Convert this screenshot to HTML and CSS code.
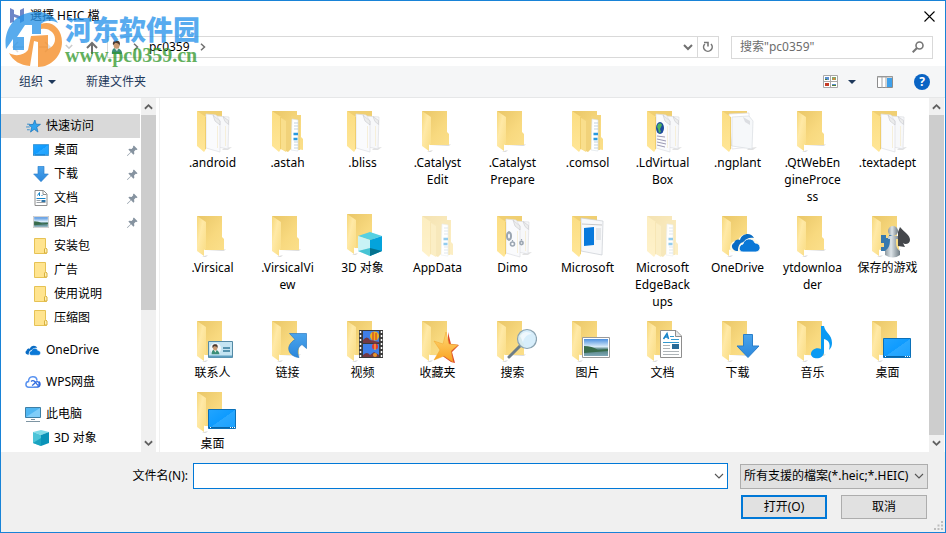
FILE: index.html
```html
<!DOCTYPE html>
<html lang="zh-CN">
<head>
<meta charset="utf-8">
<title>選擇 HEIC 檔</title>
<link rel="stylesheet" href="styles.css">
</head>
<body>
<svg class="defs" aria-hidden="true">
  <defs>
    <linearGradient id="gBack" x1="0" y1="0" x2="1" y2="1"><stop offset="0" stop-color="#e9c667"/><stop offset=".6" stop-color="#f8d97f"/><stop offset="1" stop-color="#fbdf8a"/></linearGradient>
    <linearGradient id="gFlap" x1="0" y1="0" x2="1" y2="1"><stop offset="0" stop-color="#f6d779"/><stop offset=".4" stop-color="#ffe9a6"/><stop offset="1" stop-color="#f9dc83"/></linearGradient>
    <linearGradient id="gFlapFull" x1="0" y1="0" x2="0" y2="1"><stop offset="0" stop-color="#fbdd82"/><stop offset="1" stop-color="#ffe697"/></linearGradient>
    <linearGradient id="gBlue" x1="0" y1="0" x2="1" y2="1"><stop offset="0" stop-color="#22a5ff"/><stop offset=".5" stop-color="#0e9bff"/><stop offset=".51" stop-color="#2aa8ff"/><stop offset="1" stop-color="#1aa1ff"/></linearGradient>
    <linearGradient id="gArrow" x1="0" y1="0" x2="0" y2="1"><stop offset="0" stop-color="#4aa4ec"/><stop offset="1" stop-color="#2b87dc"/></linearGradient>
    <linearGradient id="gPhoto" x1="0" y1="0" x2="0" y2="1"><stop offset="0" stop-color="#4b8fe0"/><stop offset=".45" stop-color="#d8ebf8"/><stop offset=".6" stop-color="#4d7d78"/><stop offset="1" stop-color="#7fa8b8"/></linearGradient>
    <linearGradient id="gPawn" x1="0" y1="0" x2="1" y2="0"><stop offset="0" stop-color="#8d99a0"/><stop offset=".4" stop-color="#dde4e8"/><stop offset="1" stop-color="#6d7a82"/></linearGradient>
    <linearGradient id="gStar" x1="0" y1="0" x2="0" y2="1"><stop offset="0" stop-color="#ffd978"/><stop offset="1" stop-color="#f9a11e"/></linearGradient>

    <symbol id="folder" viewBox="0 0 48 48">
      <path d="M33 39l4-1-2 2H17z" fill="#ddd"/><path d="M15 45l4-1-2 2h-4z" fill="#ddd"/>
      <path d="M8 5h25v21l2 2v11H16z" fill="url(#gBack)"/>
      <path d="M8 5l9 6v27l-2 1v6l-7-5z" fill="url(#gFlap)"/>
    </symbol>
    <symbol id="shell" viewBox="0 0 48 48">
      <path d="M8 5h25v35H16z" fill="#f0cf72"/>
    </symbol>
    <symbol id="flap" viewBox="0 0 48 48">
      <path d="M8 5l9 6v32l-2 3-7-6z" fill="url(#gFlapFull)"/><path d="M16.500 11v32" stroke="#f0ce6e" fill="none"/>
    </symbol>
    <symbol id="docs" viewBox="0 0 48 48">
      <path d="M35 42l8-1-4 3h-6z" fill="#e2e2e2"/>
      <use href="#shell"/>
      <path d="M27 10l13 1-1 32-10-2z" fill="#f7f8fa" stroke="#dcdee2" stroke-width=".7"/>
      <path d="M17 8l10 1 4 6v31l-14-4z" fill="#fafbfd" stroke="#dcdee2" stroke-width=".7"/>
      <path d="M24 9l2 6 5 4v-4zM34 10.500l2 5 3.500 3v-4z" fill="#eceded" stroke="#c7c8cc" stroke-width=".6"/>
      <path d="M28.500 20v22M36.500 20v20" stroke="#f6efda"/>
      <use href="#flap"/>
    </symbol>
    <symbol id="onedoc" viewBox="0 0 48 48">
      <path d="M35 42l8-1-4 3h-6z" fill="#e2e2e2"/>
      <use href="#shell"/>
      <path d="M15 8l20-1 1 34-18 2z" fill="#fff" stroke="#dcdde2" stroke-width=".7"/>
      <path d="M18 11l17-1 4 5-1 28-20-3z" fill="#f6f8fa" stroke="#d9dce1" stroke-width=".7"/>
      <path d="M29 11l2 5 5 3v-4z" fill="#dcdee2"/>
      <use href="#flap"/>
    </symbol>
    <symbol id="nested" viewBox="0 0 48 48">
      <path d="M8 5h25v4h4v22l2 2v11l-18-3z" fill="url(#gBack)"/>
      <path d="M27 10h9v34h-9z" fill="#f3d47c"/>
      <path d="M28 13l6 1v31l-7-1z" fill="#fff" stroke="#d9e0e6" stroke-width=".6"/>
      <path d="M30 17h4M30 20h4M30 23h4M30 36h4M30 39h4M30 42h4" stroke="#a7bfd0" stroke-width=".7"/>
      <path d="M29.500 28h4.500M29.500 33h4" stroke="#2a9ade" stroke-width="2.500"/>
      <path d="M17 12l10 3v28l-3 3-7-3z" fill="#f1d27a"/><path d="M17 12l5 3v31l-5-3z" fill="#f9de8c"/>
      <use href="#flap"/>
    </symbol>
    <symbol id="cube" viewBox="0 0 24 24">
      <path d="M12 0l12 4-12 4L0 4z" fill="#55d0e2"/><path d="M0 4l12 4v16L0 19z" fill="#c9f3f6"/><path d="M24 4L12 8v16l12-5z" fill="#04a3dc"/><path d="M12 16l12 3-12 5z" fill="#06728e"/><path d="M0 19l12-3v8z" fill="#47c4d4"/>
    </symbol>
    <symbol id="minicube" viewBox="0 0 16 16">
      <path d="M8 0l8 2-8 3-8-3z" fill="#7fdbe8"/><path d="M0 2l8 3v11l-8-3z" fill="#4cc4d8"/><path d="M16 2L8 5v11l8-3z" fill="#0a93b8"/><path d="M0 13l8-5v8z" fill="#1ba3c0"/>
    </symbol>
    <symbol id="screen" viewBox="0 0 28 20">
      <path d="M.5.5h27v19H.5z" fill="url(#gBlue)" stroke="#0b70b8"/><path d="M1 18.500h26" stroke="#0865a8"/><path d="M2 18.500h1m19 0h1m1 0h1m1 0h1" stroke="#fff"/>
    </symbol>
    <symbol id="down" viewBox="0 0 24 24">
      <path d="M7.500.5h9V12H23L12 23.500 1 12h6.500z" fill="url(#gArrow)" stroke="#2a7fcb"/>
    </symbol>
    <symbol id="page" viewBox="0 0 22 28">
      <path d="M.5.500H16l5.500 5.500v21.500H.5z" fill="#fff" stroke="#8e8e8e"/><path d="M15.500 1v5.500H21" fill="#e8e8e8" stroke="#8e8e8e"/>
      <path d="M3.500 9L7 3.500 8.500 9M5 7h3" fill="none" stroke="#1583c9" stroke-width="1.500"/>
      <path d="M10 6.500h4M11 9.500h8M3 12.500h16" stroke="#3298cf"/><path d="M3 15.500h7M3 18.500h7M3 21.500h16M3 24.500h16" stroke="#aeb4b8"/><path d="M12 14h7v5h-7z" fill="#286a98"/>
    </symbol>
    <symbol id="minipage" viewBox="0 0 13 16">
      <path d="M.5.500h8.500l3.500 3.500v11.500H.5z" fill="#fff" stroke="#8e8e8e"/><path d="M8.500 1v3.500H12" fill="none" stroke="#8e8e8e"/>
      <path d="M3 5.500L5 2.500V6M7 5.500h1M2 8.500h9" fill="none" stroke="#1583c9"/><path d="M2 10.500h4M2 12.500h9" stroke="#9aa0a6"/><path d="M7 10h4v2H7z" fill="#2d75aa"/>
    </symbol>
    <symbol id="photo" viewBox="0 0 28 21">
      <path d="M.5.5h27v20H.5z" fill="#fff" stroke="#9a9a9a"/><path d="M2 2h24v17H2z" fill="url(#gPhoto)"/><path d="M2 9q8 0 14 4l10-1v2L2 16z" fill="#386b4b"/>
    </symbol>
    <symbol id="cloud" viewBox="0 0 30 20">
      <path d="M7 18C1 18-1 12 3 10c1-4 5-4 6-3 2-7 11-8 14-2-5-1-8 1-9 4-6 0-7 5-7 9z" fill="#0a6cc4"/>
      <path d="M12 19c-5 0-5-7 0-8 1-6 10-7 12-1 6 0 7 8 1 9z" fill="#0a78d7" stroke="#fff" stroke-width=".8"/>
    </symbol>
    <symbol id="minifolder" viewBox="0 0 14 16">
      <path d="M.5.500h11v9l1 1v5H.5z" fill="#ffe48f" stroke="#e6c254"/><path d="M10.500 15v-4l1-1 1.500 1v4z" fill="#fff0b5" stroke="#d9b13d"/>
    </symbol>
    <symbol id="pin" viewBox="0 0 12 12">
      <path d="M7.500.500L11.500 4.500l-1 1-1-.3L7.700 7l.3 2.500-1 1-2.500-2.500L.5 12 0 11.500 4 7.500 1.500 5l1-1L5 4.300 6.800 2.500l-.3-1z" fill="#8693a0"/>
    </symbol>
    <symbol id="chevD" viewBox="0 0 10 7"><path d="M1 1l4 4 4-4" fill="none" stroke="currentColor" stroke-width="2"/></symbol>
    <symbol id="chevR" viewBox="0 0 6 8"><path d="M1 .700L4.500 4 1 7.300" fill="none" stroke="currentColor" stroke-width="1.500"/></symbol>
    <symbol id="chevThin" viewBox="0 0 10 7"><path d="M1 1l4 4 4-4" fill="none" stroke="#555" stroke-width="1.100"/></symbol>
    <symbol id="tri" viewBox="0 0 8 4"><path d="M0 0h8L4 4z" fill="#1e395b"/></symbol>
    <symbol id="person" viewBox="0 0 14 17">
      <path d="M1 16c0-5 1-7 5-7s7 3 7 7z" fill="#3c8e78"/><path d="M4 9l3 4 2-4z" fill="#e7efe8"/><ellipse cx="6.500" cy="5.500" rx="3.500" ry="4.500" fill="#c99a72"/><path d="M2.500 6C1 1 5 0 7 .5c4 0 4 4 2.500 6C9.500 3 7 4 5 3z" fill="#4a3a31"/>
    </symbol>
  </defs>
</svg>

<div class="dialog">
  <header class="titlebar">
    <svg class="appicon" viewBox="0 0 16 16"><path d="M1 0l4 2v4l6 2V2l4-2v13l-4 2v-4L5 9v5l-4 1z" fill="#6f87c8"/></svg>
    <h1>選擇 HEIC 檔</h1>
    <button class="close" aria-label="关闭"><svg width="11" height="11" viewBox="0 0 11 11"><path d="M.5.5l10 10m0-10l-10 10" stroke="#000" stroke-width="1.100"/></svg></button>
  </header>

  <div class="navbar">
    <div class="history">
      <button aria-label="返回"><svg width="14" height="12" viewBox="0 0 14 12"><path d="M13 6H2m5-5L2 6l5 5" fill="none" stroke="#ddd" stroke-width="1.500"/></svg></button>
      <button aria-label="前进"><svg width="14" height="12" viewBox="0 0 14 12"><path d="M1 6h11M7 1l5 5-5 5" fill="none" stroke="#ddd" stroke-width="1.500"/></svg></button>
      <button class="recent" aria-label="最近位置"><svg width="8" height="6"><use href="#chevD"/></svg></button>
      <button aria-label="上移"><svg width="12" height="13" viewBox="0 0 12 13"><path d="M6 13V2M1 7l5-5 5 5" fill="none" stroke="#707070" stroke-width="2"/></svg></button>
    </div>
    <div class="address">
      <svg width="12" height="17"><use href="#person"/></svg>
      <svg class="crumb" width="6" height="8"><use href="#chevR"/></svg>
      <a href="#">pc0359</a>
      <svg class="crumb" width="6" height="8"><use href="#chevR"/></svg>
      <button class="drop" aria-label="历史记录"><svg width="10" height="7"><use href="#chevD"/></svg></button>
      <button class="refresh" aria-label="刷新"><svg width="12" height="12" viewBox="0 0 12 12"><path d="M2.800 3A4.300 4.300 0 1 0 9 3" fill="none" stroke="#777" stroke-width="1.600"/><path d="M2 1.500h4v4" fill="none" stroke="#777" stroke-width="1.600"/></svg></button>
    </div>
    <div class="search">
      <input type="text" aria-label="搜索" placeholder='搜索"pc0359"'>
      <svg width="12" height="12" viewBox="0 0 12 12"><circle cx="7.500" cy="4.500" r="3.500" fill="none" stroke="#777" stroke-width="1.600"/><path d="M5 7L.7 11.300" stroke="#777" stroke-width="2"/></svg>
    </div>
  </div>

  <div class="toolbar">
    <button class="organize">组织 <svg width="8" height="4"><use href="#tri"/></svg></button>
    <button>新建文件夹</button>
    <div class="tools">
      <button class="view" aria-label="视图"><svg width="15" height="13" viewBox="0 0 15 13"><path d="M.5.500h14v12H.5zM7.500 0v13M0 6.500h15" fill="#fff" stroke="#a8a8a8"/><path d="M2 2h4v3H2zM9 9h4v2H9z" fill="#5b8fce"/><path d="M9 2h4v3H9z" fill="#83a66b"/><path d="M2 8h4v3H2z" fill="#c53b26"/><path d="M10 3h2v2h-2z" fill="#d9883d"/><path d="M9 10h4v1H9zM2 4h2v1H2z" fill="#4e7b32"/></svg><svg width="8" height="4"><use href="#tri"/></svg></button>
      <button aria-label="预览窗格"><svg width="16" height="12" viewBox="0 0 16 12"><path d="M.5.500h15v11H.5z" fill="#fff" stroke="#8c8c8c"/><path d="M0 1h16M5 1v11M9 1v11" stroke="#a5a5a5"/><path d="M10 2h5v9h-5z" fill="#3ea0ea"/></svg></button>
      <button aria-label="帮助"><span class="help">?</span></button>
    </div>
  </div>

  <main class="content">
    <nav class="tree">
      <ul>
        <li class="selected root"><a href="#"><svg width="15" height="13" viewBox="0 0 16 14"><path d="M9.500 0l1.300 4.500 4.700.2-4 3 1.300 5.300-4-3-4 3L6 8 3 5l4.500-.3z" fill="#2fa3ee" stroke="#1976bd" stroke-width=".8"/><path d="M1 4.500h3M0 7.500h4M1 10.500h3" stroke="#3b8fca"/></svg>快速访问</a></li>
        <li><a href="#"><svg width="16" height="12"><use href="#screen"/></svg>桌面<svg class="pin"><use href="#pin"/></svg></a></li>
        <li><a href="#"><svg width="16" height="16"><use href="#down"/></svg>下载<svg class="pin"><use href="#pin"/></svg></a></li>
        <li><a href="#"><svg width="16" height="16"><use href="#minipage"/></svg>文档<svg class="pin"><use href="#pin"/></svg></a></li>
        <li><a href="#"><svg width="16" height="12"><use href="#photo"/></svg>图片<svg class="pin"><use href="#pin"/></svg></a></li>
        <li><a href="#"><svg width="16" height="16"><use href="#minifolder"/></svg>安装包</a></li>
        <li><a href="#"><svg width="16" height="16"><use href="#minifolder"/></svg>广告</a></li>
        <li><a href="#"><svg width="16" height="16"><use href="#minifolder"/></svg>使用说明</a></li>
        <li><a href="#"><svg width="16" height="16"><use href="#minifolder"/></svg>压缩图</a></li>
      </ul>
      <ul><li class="root"><a href="#"><svg width="16" height="11"><use href="#cloud"/></svg>OneDrive</a></li></ul>
      <ul><li class="root"><a href="#"><svg width="16" height="12" viewBox="0 0 16 12"><path d="M9 11.200H3.700C0 11 .1 6 3.500 5.600 3.600-.6 11.600-.600 12 4.600" fill="none" stroke="#5a93f0" stroke-width="1.500"/><path d="M6 5.500c2-2 4 0 5 1.500s2 3 3 1.500c.6-2-1-3.500-2.700-2.700C9.500 7 9 8.500 7 9.500M9 11.200h2.500c4 0 4.400-4 2.300-5.600" fill="none" stroke="#2f6be0" stroke-width="1.300"/></svg>WPS网盘</a></li></ul>
      <ul>
        <li class="root"><a href="#"><svg width="16" height="15" viewBox="0 0 16 15"><path d="M.5.500h15v10H.5z" fill="#4fb6f2" stroke="#3d7fa6"/><path d="M1 10L15 1v9z" fill="#7fcdf9"/><path d="M6 12.500h4M1 14.500h14" stroke="#7e95a3"/></svg>此电脑</a></li>
        <li><a href="#"><svg width="16" height="16"><use href="#minicube"/></svg>3D 对象</a></li>
      </ul>
    </nav>
    <div class="scroll scroll-tree"><svg class="up" width="9" height="7"><use href="#chevD"/></svg><div class="track"><div class="thumb"></div></div><svg width="9" height="7"><use href="#chevD"/></svg></div>

    <ul class="files">
      <li><a href="#"><svg><use href="#docs"/></svg><span>.android</span></a></li>
      <li><a href="#"><svg><use href="#nested"/></svg><span>.astah</span></a></li>
      <li><a href="#"><svg><use href="#docs"/></svg><span>.bliss</span></a></li>
      <li><a href="#"><svg><use href="#folder"/></svg><span>.Catalyst Edit</span></a></li>
      <li><a href="#"><svg><use href="#folder"/></svg><span>.Catalyst Prepare</span></a></li>
      <li><a href="#"><svg><use href="#nested"/></svg><span>.comsol</span></a></li>
      <li><a href="#"><svg viewBox="0 0 48 48"><use href="#docs"/><ellipse cx="21" cy="22" rx="4" ry="6" fill="#1c4b9c"/><path d="M19 18q3-2 4 1l-2 4 1 3-2 1-1-4-1-2z" fill="#4db45e"/><path d="M18 30l8 1M18 33l9 2M18 36l9 2M18 39l8 2" stroke="#817fa0" stroke-width=".8"/></svg><span>.LdVirtual Box</span></a></li>
      <li><a href="#"><svg><use href="#onedoc"/></svg><span>.ngplant</span></a></li>
      <li><a href="#"><svg><use href="#folder"/></svg><span>.QtWebEngineProcess</span></a></li>
      <li><a href="#"><svg><use href="#docs"/></svg><span>.textadept</span></a></li>

      <li><a href="#"><svg><use href="#folder"/></svg><span>.Virsical</span></a></li>
      <li><a href="#"><svg><use href="#folder"/></svg><span>.VirsicalVi<wbr>ew</span></a></li>
      <li><a href="#"><svg viewBox="0 0 48 48"><use href="#folder" y="-2"/><use href="#cube" x="19" y="21" width="24" height="24"/></svg><span>3D 对象</span></a></li>
      <li class="hidden-item"><a href="#"><svg><use href="#nested"/></svg><span>AppData</span></a></li>
      <li><a href="#"><svg viewBox="0 0 48 48"><use href="#docs"/><g fill="none" stroke="#9ba6b2"><ellipse cx="20" cy="25" rx="2" ry="3.500" stroke-width="2"/><circle cx="23.500" cy="33" r="2" stroke-width="1.600"/><circle cx="32.500" cy="32" r="1.600" stroke-width="1.600"/><path d="M20 20v10M17 25h6M23.500 29v8M32.500 28v8" stroke-dasharray="1.500 7 1.500" stroke-width="1.200"/></g></svg><span>Dimo</span></a></li>
      <li><a href="#"><svg viewBox="0 0 48 48"><use href="#shell"/><path d="M17 7l22 3-1 34-21-4z" fill="#f7f8fa" stroke="#c9cdd3" stroke-width=".7"/><path d="M18 13l20 1" stroke="#bbb" stroke-width=".8"/><path d="M20 17l10-1v18l-10 1z" fill="#0879dc"/><path d="M32 18h5M32 20h5M32 22h5M32 24h5M32 26h5M32 28h5" stroke="#d2d5d8"/><use href="#flap"/></svg><span>Microsoft</span></a></li>
      <li class="hidden-item"><a href="#"><svg><use href="#nested"/></svg><span>Microsoft EdgeBackups</span></a></li>
      <li><a href="#"><svg viewBox="0 0 48 48"><use href="#folder"/><path d="M17 41c-3-9 3-12 7-11 2-8 12-9 16-2 5 1 8 9 4 13z" fill="#fffbe8"/><use href="#cloud" x="17" y="22" width="30" height="20"/></svg><span>OneDrive</span></a></li>
      <li><a href="#"><svg><use href="#folder"/></svg><span>ytdownloader</span></a></li>
      <li><a href="#"><svg viewBox="0 0 48 48"><use href="#folder"/><path d="M17 24h5v3h3v-3h4v16H17v-4h3v-4h-3z" fill="#3679ae"/><path d="M36 16c4 5 10 8 10 13 0 4-5 5-7 3l2 4-7-1V21z" fill="#44474b"/><circle cx="29" cy="20" r="5" fill="url(#gPawn)"/><path d="M24 25h10v3h-2c0 7 0 9 4 12v4q-7 5-15 0v-4c4-3 5-6 5-12h-2z" fill="url(#gPawn)"/></svg><span>保存的游戏</span></a></li>

      <li><a href="#"><svg viewBox="0 0 48 48"><use href="#folder"/><path d="M19.500 25.500h24v16h-24z" fill="#c4e4f2" stroke="#548aa5"/><path d="M20 40.500h23" stroke="#5e9fc0" stroke-width="2"/><circle cx="26.500" cy="32.500" r="5.500" fill="#f2f8fb"/><use href="#person" x="22" y="28" width="9" height="11"/><path d="M34 32h7M34 35h7" stroke="#337a99" stroke-width="1.500"/></svg><span>联系人</span></a></li>
      <li><a href="#"><svg viewBox="0 0 48 48"><use href="#folder"/><path d="M25.500 17.500h17v15l-4.500-4c-5 3-5 8-3 13-10-1-15-11-4-18z" fill="url(#gArrow)" stroke="#2b7bc4" stroke-width=".7"/></svg><span>链接</span></a></li>
      <li><a href="#"><svg viewBox="0 0 48 48"><use href="#folder"/><path d="M20 14h24v28H20z" fill="#3b3b3b"/><path d="M21.500 15v27M42.500 15v27" stroke="#fff" stroke-width="1.500" stroke-dasharray="2 2"/><path d="M24 15h16v12H24zM24 28h16v13H24z" fill="#3f7fe8"/><ellipse cx="35.500" cy="20" rx="4.500" ry="4.500" fill="#efb31b"/><path d="M34 16v9M37 17v7" stroke="#c82d2d"/><ellipse cx="36" cy="30.500" rx="3" ry="3" fill="#dd3938"/><path d="M36 28v6" stroke="#f8da39"/><path d="M24 24q4-5 7 0l9 2v1H24zM24 39q4-4 7 0l4-3 5 3v2H24z" fill="#733943"/><circle cx="36" cy="39" r="2" fill="#e5962c"/></svg><span>视频</span></a></li>
      <li><a href="#"><svg viewBox="0 0 48 48"><use href="#folder"/><path d="M34 16l3 12 8 1-7 7 3 11-4-1-10-7 7-9z" fill="#dc482a"/><path d="M32 16l3 12 9 1-7 6 2 11-9-6-10 4 6-10-6-9 9 3z" fill="url(#gStar)" stroke="#efa72e" stroke-width=".5"/></svg><span>收藏夹</span></a></li>
      <li><a href="#"><svg viewBox="0 0 48 48"><use href="#folder"/><path d="M31 30L20 41" stroke="#6d7d88" stroke-width="3" stroke-linecap="round"/><circle cx="38" cy="23" r="9.500" fill="#d3ecfb" fill-opacity=".9" stroke="#8ba3b1" stroke-width="1.200"/><path d="M31 20q5-7 12-2-7 0-9 8z" fill="#fff" opacity=".6"/></svg><span>搜索</span></a></li>
      <li><a href="#"><svg viewBox="0 0 48 48"><use href="#folder"/><use href="#photo" x="18" y="21" width="28" height="21"/></svg><span>图片</span></a></li>
      <li><a href="#"><svg viewBox="0 0 48 48"><use href="#folder"/><use href="#page" x="21" y="14" width="22" height="28"/></svg><span>文档</span></a></li>
      <li><a href="#"><svg viewBox="0 0 48 48"><use href="#folder"/><use href="#down" x="22" y="18" width="24" height="24"/></svg><span>下载</span></a></li>
      <li><a href="#"><svg viewBox="0 0 48 48"><use href="#folder"/><path d="M32 10h3c1 7 8 8 8 17 0 3-1 5-3 7 2-7-1-10-5-11v13c0 8-13 8-13 2 0-4 5-7 10-5z" fill="#0a9af3"/></svg><span>音乐</span></a></li>
      <li><a href="#"><svg viewBox="0 0 48 48"><use href="#folder"/><use href="#screen" x="19" y="22" width="28" height="20"/></svg><span>桌面</span></a></li>
      <li><a href="#"><svg viewBox="0 0 48 48"><use href="#folder"/><use href="#screen" x="19" y="22" width="28" height="20"/></svg><span>桌面</span></a></li>
    </ul>
    <div class="scroll scroll-files"><svg class="up" width="9" height="7"><use href="#chevD"/></svg><div class="track"><div class="thumb"></div></div><svg width="9" height="7"><use href="#chevD"/></svg></div>
  </main>

  <footer class="footer">
    <div class="row">
      <label for="filename">文件名(N):</label>
      <div class="combo"><input id="filename" type="text"><svg width="10" height="7"><use href="#chevThin"/></svg></div>
      <div class="filter"><select aria-label="文件类型"><option>所有支援的檔案(*.heic;*.HEIC)</option></select><svg width="10" height="7"><use href="#chevThin"/></svg></div>
    </div>
    <div class="row actions"><button class="primary">打开(O)</button><button>取消</button></div>
    <svg class="grip" width="9" height="9" viewBox="0 0 9 9"><path d="M7 0h2v2H7zM7 3.500h2v2H7zM7 7h2v2H7zM3.500 3.500h2v2h-2zM3.500 7h2v2h-2zM0 7h2v2H0z" fill="#bdbdbd"/></svg>
  </footer>

  <div class="watermark">
    <svg width="58" height="58" viewBox="0 0 58 58">
      <path d="M1 38C-2 19 9 3 28 1c12-1 21 4 25 11-6-3-13-3-17 1v10h-9V14h-7l-8 12h7v13H8V28z" fill="#2492e8"/>
      <path d="M36 13C46 9 57 17 57 31 57 45 46 56 33 56V31l-4-1-4 25C15 54 8 50 4 42c7 4 15 2 19-3l3-14 17-1v14c8-3 9-12 4-17-3-3-7-4-11-3z" fill="#f58a1f"/>
    </svg>
    <div class="brand"><strong>河东软件园</strong><span>www.pc0359.cn</span></div>
  </div>
</div>
</body>
</html>
```
FILE: styles.css
```css
* { box-sizing: border-box; }
body {
  margin: 0;
  font: 12px/16px "Noto Sans", "Noto Sans CJK SC", sans-serif;
  color: #000;
}
ul { list-style: none; margin: 0; padding: 0; }
a { color: inherit; text-decoration: none; }
button, input, select { font: inherit; color: inherit; }
button { border: 0; padding: 0; background: none; display: inline-flex; align-items: center; justify-content: center; }
svg { flex: none; }
.defs { position: absolute; width: 0; height: 0; }

.dialog {
  position: relative;
  display: flex;
  flex-direction: column;
  min-height: 100vh;
  border: 1px solid #1883d7;
  background: #fff;
}

.titlebar { display: flex; align-items: center; height: 30px; padding: 0 10px 0 8px; }
.appicon { width: 16px; height: 16px; }
.titlebar h1 { flex: 1; margin: 0 0 0 5px; font-size: 12px; font-weight: 400; }

.navbar { display: flex; align-items: center; height: 35px; padding: 0 12px 3px 10px; gap: 12px; }
.history { display: flex; align-items: center; gap: 13px; width: 84px; height: 22px; }
.recent { color: #ccc; }
.address {
  flex: 1;
  display: flex;
  align-items: center;
  height: 22px;
  gap: 10px;
  padding-left: 3px;
  border: 1px solid #d9d9d9;
  color: #707070;
}
.address a { color: #000; }
.address .drop { margin-left: auto; }
.address .refresh { align-self: stretch; width: 21px; margin-left: -6px; border-left: 1px solid #d9d9d9; }
.search { display: flex; align-items: center; width: 202px; height: 23px; padding: 0 8px; border: 1px solid #d9d9d9; }
.search input { flex: 1; min-width: 0; border: 0; padding: 0; outline: 0; }
.search input::placeholder { color: #6d6d6d; opacity: 1; }

.toolbar {
  display: flex;
  align-items: center;
  gap: 30px;
  height: 32px;
  padding: 0 15px 0 18px;
  background: #f5f6f7;
  border-bottom: 1px solid #e6e7e8;
  color: #1e395b;
}
.organize { gap: 5px; }
.tools { display: flex; align-items: center; gap: 21px; margin-left: auto; }
.view { gap: 10px; }
.help {
  width: 16px;
  height: 16px;
  border-radius: 50%;
  background: #0a64c4;
  color: #fff;
  font-weight: 700;
  line-height: 16px;
  text-align: center;
}

.content { flex: 1; display: flex; }
.tree { width: 139px; padding-top: 16px; display: flex; flex-direction: column; gap: 8px; }
.tree a { display: flex; align-items: center; gap: 5px; height: 24px; padding: 0 2px 0 32px; }
.tree .root a { padding-left: 24px; }
.tree .selected { background: #d9d9d9; }
.tree .selected a { padding-left: 25px; }
.tree .pin { width: 11px; height: 11px; margin-left: auto; }

.scroll {
  display: flex;
  flex-direction: column;
  align-items: center;
  justify-content: space-between;
  width: 16px;
  padding: 5px 0;
  gap: 5px;
  background: #f0f0f0;
  color: #606060;
}
.scroll .up { transform: rotate(180deg); }
.track { flex: 1; width: 100%; }
.thumb { height: 100%; background: #cdcdcd; }
.scroll-tree { width: 15px; margin: 0 3px 0 1px; }
.scroll-tree .thumb { height: 61%; }

.files {
  flex: 1;
  display: grid;
  grid-template-columns: repeat(auto-fill, 75px);
  align-content: start;
  padding: 2px 0 0 15px;
  border-left: 1px solid #f0f0f0;
}
.files a { display: flex; flex-direction: column; align-items: center; padding: 6px 7px 0; line-height: 17px; text-align: center; }
.files svg { width: 48px; height: 48px; }
.files span { max-width: 100%; overflow-wrap: anywhere; }
.hidden-item svg { opacity: .5; }
.scroll-files { width: 15px; margin-right: 1px; }

.footer { position: relative; display: flex; flex-direction: column; gap: 6px; padding: 11px 17px 13px 0; background: #f0f0f0; }
.row { display: flex; align-items: center; gap: 12px; }
.row label { width: 187px; margin-right: -7px; text-align: right; }
.combo { position: relative; flex: 1; display: flex; align-items: center; height: 26px; border: 1px solid #0078d7; background: #fff; }
.combo input { flex: 1; height: 100%; border: 0; outline: 0; padding: 0 4px; background: none; }
.combo svg { margin-right: 3px; }
.filter { position: relative; width: 188px; height: 25px; }
.filter select { width: 100%; height: 100%; padding: 0 3px; appearance: none; border: 1px solid #adadad; border-radius: 0; background: #e1e1e1; }
.filter svg { position: absolute; right: 4px; top: 9px; }
.actions { justify-content: flex-end; gap: 14px; padding-right: 1px; }
.actions button { width: 86px; height: 24px; border: 1px solid #adadad; background: #e1e1e1; }
.actions .primary { border: 2px solid #0078d7; }
.grip { position: absolute; right: 2px; bottom: 2px; }

.watermark { position: absolute; left: 4px; top: 10px; display: flex; gap: 2px; opacity: .76; pointer-events: none; }
.brand { display: flex; flex-direction: column; padding-top: 3px; }
.brand strong { font: 900 27px/30px "Noto Sans CJK SC", sans-serif; color: #2492ea; }
.brand span { font: 700 20px/22px "Liberation Serif", serif; color: #32982c; }
```
